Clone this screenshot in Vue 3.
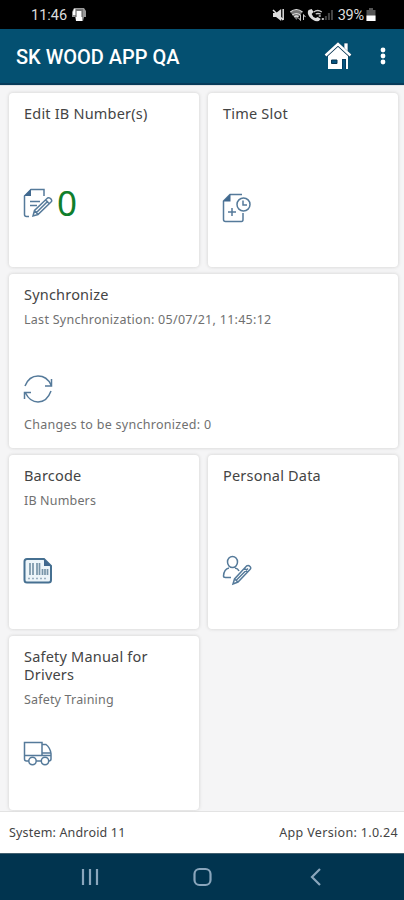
<script setup>
const cards = [
  { id: 'edit', title: 'Edit IB Number(s)', count: '0' },
  { id: 'slot', title: 'Time Slot' },
  { id: 'sync', title: 'Synchronize', sub: 'Last Synchronization: 05/07/21, 11:45:12', foot: 'Changes to be synchronized: 0', wide: true },
  { id: 'barcode', title: 'Barcode', sub: 'IB Numbers' },
  { id: 'person', title: 'Personal Data' },
  { id: 'truck', title: 'Safety Manual for Drivers', sub: 'Safety Training' },
]
</script>

<template>
  <div class="phone">
    <div class="status">
      <span class="clock">11:46</span>
      <svg class="notice" width="14" height="15" viewBox="0 0 14 15">
        <path d="M2 1h10l2 3v6h-2l-1 4H4L3 10H0V5z" fill="#999" />
        <path d="M4 4h6v10H4zM2 2h2v6H1V5z" fill="#fff" />
        <path d="M3 3h8M4 4v6M10 4v6" stroke="#555" fill="none" />
      </svg>
      <div class="signals">
        <svg width="62" height="14" viewBox="0 0 61 14" preserveAspectRatio="none">
          <path d="M1 5h3l5-4v12L4 9H1z" fill="#ddd" />
          <path d="M1 2l10 10M11 1v11" stroke="#ddd" stroke-width="1.5" />
          <path d="M18 4q6-5 12 0l-6 8z" fill="#777" />
          <path d="M18 4q6-5 12 0M20 7q4-3 8 0M22 9q2-2 4 0" stroke="#ddd" fill="none" stroke-width="1.2" />
          <path d="M28 7v5l-2-2M31 12V7l2 2" stroke="#ccc" fill="none" />
          <path d="M36 2l3-1 2 3-2 2q1 3 4 4l2-1 3 2-2 2q-5 1-9-4-3-4-1-7z" fill="#ddd" />
          <path d="M41 4q4-3 8 0M43 6q2-1 5 0M46 8h2" stroke="#ccc" fill="none" stroke-width="1.3" />
          <path d="M53 12V8M56 12V5M59 12V2" stroke="#444" stroke-width="2" />
          <path d="M50 12v-2" stroke="#bbb" stroke-width="2" />
        </svg>
        <span class="percent">39%</span>
        <svg width="10" height="13" viewBox="0 0 10 13">
          <path d="M3 0h4v2h2.500v11h-9V2H3z" fill="#555" />
          <path d="M.5 7.500h9V13h-9z" fill="#fff" />
        </svg>
      </div>
    </div>

    <header class="bar">
      <h1>SK WOOD APP QA</h1>
      <svg class="home" width="28" height="28" viewBox="0 0 28 28">
        <path d="M20 1h4v10h-4z" fill="#fff" stroke="#063c5e" stroke-width=".7" />
        <path d="M4 13L14 4l10 9v14H4z" fill="#fff" />
        <path d="M1.500 14L14 2.500 26.500 14" fill="none" stroke="#073452" stroke-width="3.600" />
        <path d="M1.500 13.500L14 2l12.500 11.500" fill="none" stroke="#fff" stroke-width="2.500" />
        <path d="M7.500 18h5.500v3.500H7.500z" fill="#055580" stroke="#073452" />
        <path d="M18 17h4v10h-4z" fill="#063c5e" />
        <path d="M20 18v9" stroke="#055580" stroke-width="2" />
      </svg>
      <svg class="dots" width="6" height="18" viewBox="0 0 6 18" fill="#fff">
        <circle cx="3" cy="3" r="2.400" /><circle cx="3" cy="9" r="2.400" /><circle cx="3" cy="15" r="2.400" />
      </svg>
    </header>

    <main class="tiles">
      <section v-for="c in cards" :key="c.id" class="tile" :class="{ wide: c.wide }">
        <h2>{{ c.title }}</h2>
        <p v-if="c.sub" class="sub" :class="c.id">{{ c.sub }}</p>
        <div class="bottom" :class="c.id">
          <svg class="icon" width="30" height="30" viewBox="0 0 30 30">
            <g v-if="c.id === 'edit'">
              <path d="M21 8V1.500H8L1.500 8v18.500q0 2 2 2H6M7 13.500h10M7 17.500h7" />
              <path d="M8 1v7H1z" class="solid" />
              <path d="M10 28l1.500-5.500L24.500 10q2-1 3.500 1t0 3L15 26.500zM22.500 12l3.500 3.500M11.500 22.500L15 26.500M13.500 24.500L25 13" />
            </g>
            <g v-else-if="c.id === 'slot'">
              <path d="M20 1.500H8L1.500 8v18.500q0 2 2 2h16q1.500 0 1.500-2V20M10 15v8M6 19h8" />
              <path d="M8.500 1v7.500H1z" class="solid" />
              <circle cx="21.500" cy="11.500" r="6.500" />
              <path d="M21 7.500V12h4" />
            </g>
            <g v-else-if="c.id === 'sync'">
              <path d="M2 12Q6 2 15 2q9 0 13 9M28.500 5v7H22M28 17q-4 11-13 11-8 0-12.500-9M1.500 25v-6.500H8" />
            </g>
            <g v-else-if="c.id === 'barcode'">
              <path d="M4 4h17l7 7v14q0 2.500-2.500 2.500H4q-2.500 0-2.500-2.500V6.500Q1.500 4 4 4z" class="paper" />
              <path d="M21 4v7h7z" class="solid" />
              <path d="M7 8v12M10 8v12M14 8v12M16.500 8v12M19.500 14v6M22 14v6M24.500 14v6" class="bars" />
              <path d="M5 23.500h20" class="digits" />
            </g>
            <g v-else-if="c.id === 'person'">
              <ellipse cx="10.500" cy="7" rx="5" ry="5.500" />
              <path d="M7 13q-5 1-5.500 8 0 1.500 2 1.500H9M13 13q3 .5 4 3" />
              <path d="M11 29l1.500-5L24.500 11q2-1 3.500.5t0 3L16 27zM22.500 13l3.500 3.500M12.500 24l3.500 3M14.500 25L26 13.500" />
            </g>
            <g v-else>
              <path d="M5.800 24H3.500q-2 0-2-2V5.500H19V18.500M13.200 24h5.100M19 7.500h4q4 3 5 9V22q0 2-2.300 2M19 16h9M2 18.500h26" />
              <circle cx="9.500" cy="24" r="3.700" /><circle cx="22" cy="24" r="3.700" />
            </g>
          </svg>
          <span v-if="c.count" class="count">{{ c.count }}</span>
        </div>
        <p v-if="c.foot" class="foot">{{ c.foot }}</p>
      </section>
    </main>

    <footer class="info">
      <span class="system">System: Android 11</span>
      <span class="version">App Version: 1.0.24</span>
    </footer>

    <nav class="nav">
      <svg width="18" height="18" viewBox="0 0 18 18"><path d="M2 1v16M9 1v16M16 1v16" /></svg>
      <svg class="square" width="20" height="20" viewBox="0 0 20 20"><rect x="1.500" y="2" width="16" height="16" rx="5" /></svg>
      <svg width="12" height="18" viewBox="0 0 12 18"><path d="M10 1L2 9l8 8" /></svg>
    </nav>
  </div>
</template>

<style>
body { margin: 0; background: #f5f5f5; }
</style>

<style scoped>
.phone { width: 404px; height: 900px; display: flex; flex-direction: column; overflow: hidden; background: #f5f5f6; font-family: "Noto Sans", "Open Sans", sans-serif; }
.status { flex: none; box-sizing: border-box; height: 29px; padding: 0 28px 0 31px; display: flex; align-items: center; background: #000; color: #ddd; font: 14.5px/31px Roboto, sans-serif; }
.clock { padding-top: 1px; }
.notice { margin-left: 5px; }
.signals { margin-left: auto; display: flex; align-items: center; }
.percent { margin: 0 2px 0 4px; padding-top: 1px; letter-spacing: -.2px; }
.bar { flex: none; box-sizing: border-box; height: 56px; padding: 0 18px 0 16px; display: flex; align-items: center; background: #045071; border-bottom: 2px solid #073b59; }
.bar h1 { margin: 2px auto 0 0; color: #fff; font: 500 20px/24px Roboto, sans-serif; letter-spacing: -.02px; white-space: nowrap; }
.home { margin-right: 28px; }
.tiles { flex: none; box-sizing: border-box; height: 727px; padding: 7px 6px 0 9px; display: grid; grid-template-columns: 190px 190px; grid-auto-rows: 174px; gap: 7px 9px; align-content: start; border-top: 1px solid #e2e4e6; border-bottom: 1px solid #e3e3e3; }
.tile { box-sizing: border-box; display: flex; flex-direction: column; padding: 11px 15px 0; background: #fff; border-radius: 4px; box-shadow: 0 0 3px 1px #dedede; }
.wide { grid-column: 1 / 3; }
h2 { margin: 0; color: #444; font-size: 14.500px; line-height: 18px; font-weight: 400; letter-spacing: .2px; }
p { margin: 0; color: #707070; font-size: 12.500px; line-height: 18px; letter-spacing: .17px; white-space: nowrap; }
p.sync, .foot { letter-spacing: .28px; }
.sub { margin-top: 8px; }
.bottom { margin-top: auto; margin-bottom: 44px; height: 30px; display: flex; align-items: center; }
.bottom.edit { margin-bottom: 49px; }
.bottom.truck { margin-bottom: 43px; }
.bottom.sync { margin-bottom: 12px; }
.foot { margin-bottom: 14px; }
.icon { flex: none; margin-left: -1px; overflow: visible; fill: none; stroke: #557a9a; stroke-width: 1.500; }
.solid { fill: #41698f; stroke: none; }
.paper { fill: #edf5f9; stroke: #467091; stroke-width: 2; }
.bars { stroke: #7895a8; stroke-width: 1.700; }
.digits { stroke: #9ab0c0; stroke-dasharray: 2 2; }
.count { margin: 0 0 0 4px; color: #107e2c; font-size: 35px; line-height: 30px; }
.info { flex: none; box-sizing: border-box; height: 41px; padding: 0 6px 0 9px; display: flex; justify-content: space-between; align-items: center; background: #fff; color: #444; font-size: 12.500px; letter-spacing: .17px; white-space: nowrap; }
.version { letter-spacing: .33px; }
.nav { flex: none; height: 47px; box-sizing: border-box; padding: 0 82px 0 81px; display: flex; justify-content: space-between; align-items: center; background: #01344f; border-top: 1px solid #42606f; }
.nav svg { fill: none; stroke: #8aa6bc; stroke-width: 2.200; }
.nav .square { margin: 0 3px 0 0; }
</style>
